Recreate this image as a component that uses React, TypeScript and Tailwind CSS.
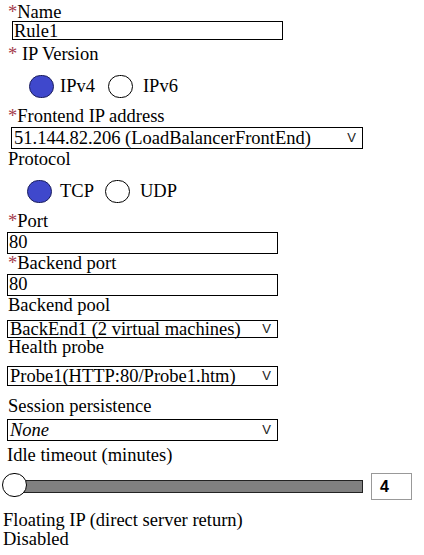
function Req() {
  return <span className="text-[#a33a4c]">*</span>;
}

function Label({ children, className = '' }: { children: React.ReactNode; className?: string }) {
  return <div className={`h-[18px] leading-[18px] whitespace-nowrap ${className}`}>{children}</div>;
}

function TextBox({ value, className = '' }: { value: string; className?: string }) {
  return (
    <div className={`border-[1.5px] border-black bg-white pl-[1px] leading-[18px] whitespace-nowrap overflow-hidden ${className}`}>
      {value}
    </div>
  );
}

function SelectBox({ value, className = '', italic = false }: { value: string; className?: string; italic?: boolean }) {
  return (
    <div className={`flex items-center justify-between border-[1.5px] border-black bg-white pl-[2px] pr-[6px] leading-[18px] whitespace-nowrap ${className}`}>
      <span className={italic ? 'italic' : ''}>{value}</span>
      <span className="font-['Liberation_Sans',Arial,sans-serif] text-[13px] font-light text-[#222]">V</span>
    </div>
  );
}

function Radio({ checked, label, gap }: { checked: boolean; label: string; gap: string }) {
  return (
    <div className="flex items-center">
      <span
        className={`block h-[23px] w-[25px] rounded-full border ${
          checked ? 'border-[#1c1f5e] bg-[#3f48cc]' : 'border-black bg-white'
        }`}
      />
      <span className={`${gap} leading-[18px]`}>{label}</span>
    </div>
  );
}

export default function App() {
  return (
    <div className="relative h-[555px] w-[424px] overflow-hidden bg-white font-['Liberation_Serif','Times_New_Roman',serif] text-[18.5px] text-black">
      <div className="pt-[3px]">
        <Label className="ml-[8px]">
          <Req />Name
        </Label>
        <TextBox value="Rule1" className="ml-[12px] h-[19px] w-[271px]" />

        <Label className="ml-[8px] mt-[5px]">
          <Req /> IP Version
        </Label>
        <div className="ml-[29px] mt-[11px] flex h-[24px] items-center">
          <Radio checked label="IPv4" gap="ml-[6px]" />
          <div className="ml-[13px]">
            <Radio checked={false} label="IPv6" gap="ml-[10px]" />
          </div>
        </div>

        <Label className="ml-[8px] mt-[9px]">
          <Req />Frontend IP address
        </Label>
        <SelectBox value="51.144.82.206 (LoadBalancerFrontEnd)" className="ml-[11px] mt-[2px] h-[22px] w-[352px]" />

        <Label className="ml-[8px] mt-[1px]">Protocol</Label>
        <div className="ml-[27px] mt-[11px] flex h-[24px] items-center">
          <Radio checked label="TCP" gap="ml-[8px]" />
          <div className="ml-[11px]">
            <Radio checked={false} label="UDP" gap="ml-[10px]" />
          </div>
        </div>

        <Label className="ml-[8px] mt-[9px]">
          <Req />Port
        </Label>
        <TextBox value="80" className="ml-[7px] mt-[2px] h-[22px] w-[271px]" />

        <Label className="ml-[8px]">
          <Req />Backend port
        </Label>
        <TextBox value="80" className="ml-[7px] mt-[2px] h-[22px] w-[271px]" />

        <Label className="ml-[8px]">Backend pool</Label>
        <SelectBox value="BackEnd1 (2 virtual machines)" className="ml-[7px] mt-[6px] h-[18px] w-[271px]" />

        <Label className="ml-[8px]">Health probe</Label>
        <SelectBox value="Probe1(HTTP:80/Probe1.htm)" className="ml-[7px] mt-[10px] h-[20px] w-[271px]" />

        <Label className="ml-[8px] mt-[11px]">Session persistence</Label>
        <SelectBox value="None" italic className="ml-[7px] mt-[4px] h-[22px] w-[271px]" />

        <Label className="ml-[7px] mt-[5px]">Idle timeout (minutes)</Label>
        <div className="ml-[2px] mt-[9px] flex h-[27px] items-center">
          <div className="relative flex h-[27px] items-center">
            <div className="ml-[22px] h-[13px] w-[339px] border border-[#222] bg-[#808080]" />
            <span className="absolute left-0 top-0 block h-[24px] w-[25px] rounded-full border border-black bg-white" />
          </div>
          <div className="ml-[8px] flex h-[27px] w-[41px] items-center border border-[#999] pl-[8px] font-['Liberation_Sans',Arial,sans-serif] text-[16px] font-bold">
            4
          </div>
        </div>

        <Label className="ml-[3px] mt-[11px]">Floating IP (direct server return)</Label>
        <Label className="ml-[3px] mt-[1px]">Disabled</Label>
      </div>
    </div>
  );
}
